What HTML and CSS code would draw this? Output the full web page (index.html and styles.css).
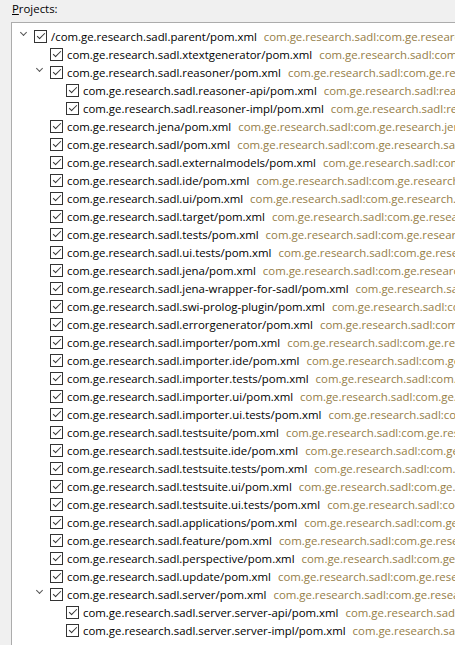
FILE: index.html
```html
<!DOCTYPE html>
<html>
<head>
<meta charset="utf-8">
<link rel="stylesheet" href="styles.css">
</head>
<body>
<div class="label"><u>P</u>rojects:</div>
<div class="panel">
  <div class="row lvl0"><span class="tw open"></span><span class="cb"></span><span class="name">/com.ge.research.sadl.parent/pom.xml</span><span class="gav">com.ge.research.sadl:com.ge.research.sadl.parent:3.5.0-SNAPSHOT:pom</span></div>
  <div class="row lvl1"><span class="tw"></span><span class="cb"></span><span class="name">com.ge.research.sadl.xtextgenerator/pom.xml</span><span class="gav">com.ge.research.sadl:com.ge.research.sadl.xtextgenerator:3.5.0-SNAPSHOT</span></div>
  <div class="row lvl1"><span class="tw open"></span><span class="cb"></span><span class="name">com.ge.research.sadl.reasoner/pom.xml</span><span class="gav">com.ge.research.sadl:com.ge.research.sadl.reasoner:3.5.0-SNAPSHOT:pom</span></div>
  <div class="row lvl2"><span class="tw"></span><span class="cb"></span><span class="name">com.ge.research.sadl.reasoner-api/pom.xml</span><span class="gav">com.ge.research.sadl:reasoner-api:3.5.0-SNAPSHOT</span></div>
  <div class="row lvl2"><span class="tw"></span><span class="cb"></span><span class="name">com.ge.research.sadl.reasoner-impl/pom.xml</span><span class="gav">com.ge.research.sadl:reasoner-impl:3.5.0-SNAPSHOT</span></div>
  <div class="row lvl1"><span class="tw"></span><span class="cb"></span><span class="name">com.ge.research.jena/pom.xml</span><span class="gav">com.ge.research.sadl:com.ge.research.jena:3.5.0-SNAPSHOT</span></div>
  <div class="row lvl1"><span class="tw"></span><span class="cb"></span><span class="name">com.ge.research.sadl/pom.xml</span><span class="gav">com.ge.research.sadl:com.ge.research.sadl:3.5.0-SNAPSHOT</span></div>
  <div class="row lvl1"><span class="tw"></span><span class="cb"></span><span class="name">com.ge.research.sadl.externalmodels/pom.xml</span><span class="gav">com.ge.research.sadl:com.ge.research.sadl.externalmodels</span></div>
  <div class="row lvl1"><span class="tw"></span><span class="cb"></span><span class="name">com.ge.research.sadl.ide/pom.xml</span><span class="gav">com.ge.research.sadl:com.ge.research.sadl.ide:3.5.0-SNAPSHOT</span></div>
  <div class="row lvl1"><span class="tw"></span><span class="cb"></span><span class="name">com.ge.research.sadl.ui/pom.xml</span><span class="gav">com.ge.research.sadl:com.ge.research.sadl.ui:3.5.0-SNAPSHOT</span></div>
  <div class="row lvl1"><span class="tw"></span><span class="cb"></span><span class="name">com.ge.research.sadl.target/pom.xml</span><span class="gav">com.ge.research.sadl:com.ge.research.sadl.target:3.5.0-SNAPSHOT</span></div>
  <div class="row lvl1"><span class="tw"></span><span class="cb"></span><span class="name">com.ge.research.sadl.tests/pom.xml</span><span class="gav">com.ge.research.sadl:com.ge.research.sadl.tests:3.5.0-SNAPSHOT</span></div>
  <div class="row lvl1"><span class="tw"></span><span class="cb"></span><span class="name">com.ge.research.sadl.ui.tests/pom.xml</span><span class="gav">com.ge.research.sadl:com.ge.research.sadl.ui.tests:3.5.0-SNAPSHOT</span></div>
  <div class="row lvl1"><span class="tw"></span><span class="cb"></span><span class="name">com.ge.research.sadl.jena/pom.xml</span><span class="gav">com.ge.research.sadl:com.ge.research.sadl.jena:3.5.0-SNAPSHOT</span></div>
  <div class="row lvl1"><span class="tw"></span><span class="cb"></span><span class="name">com.ge.research.sadl.jena-wrapper-for-sadl/pom.xml</span><span class="gav">com.ge.research.sadl:com.ge.research.sadl.jena-wrapper-for-sadl</span></div>
  <div class="row lvl1"><span class="tw"></span><span class="cb"></span><span class="name">com.ge.research.sadl.swi-prolog-plugin/pom.xml</span><span class="gav">com.ge.research.sadl:com.ge.research.sadl.swi-prolog-plugin</span></div>
  <div class="row lvl1"><span class="tw"></span><span class="cb"></span><span class="name">com.ge.research.sadl.errorgenerator/pom.xml</span><span class="gav">com.ge.research.sadl:com.ge.research.sadl.errorgenerator</span></div>
  <div class="row lvl1"><span class="tw"></span><span class="cb"></span><span class="name">com.ge.research.sadl.importer/pom.xml</span><span class="gav">com.ge.research.sadl:com.ge.research.sadl.importer:3.5.0-SNAPSHOT</span></div>
  <div class="row lvl1"><span class="tw"></span><span class="cb"></span><span class="name">com.ge.research.sadl.importer.ide/pom.xml</span><span class="gav">com.ge.research.sadl:com.ge.research.sadl.importer.ide</span></div>
  <div class="row lvl1"><span class="tw"></span><span class="cb"></span><span class="name">com.ge.research.sadl.importer.tests/pom.xml</span><span class="gav">com.ge.research.sadl:com.ge.research.sadl.importer.tests</span></div>
  <div class="row lvl1"><span class="tw"></span><span class="cb"></span><span class="name">com.ge.research.sadl.importer.ui/pom.xml</span><span class="gav">com.ge.research.sadl:com.ge.research.sadl.importer.ui</span></div>
  <div class="row lvl1"><span class="tw"></span><span class="cb"></span><span class="name">com.ge.research.sadl.importer.ui.tests/pom.xml</span><span class="gav">com.ge.research.sadl:com.ge.research.sadl.importer.ui.tests</span></div>
  <div class="row lvl1"><span class="tw"></span><span class="cb"></span><span class="name">com.ge.research.sadl.testsuite/pom.xml</span><span class="gav">com.ge.research.sadl:com.ge.research.sadl.testsuite</span></div>
  <div class="row lvl1"><span class="tw"></span><span class="cb"></span><span class="name">com.ge.research.sadl.testsuite.ide/pom.xml</span><span class="gav">com.ge.research.sadl:com.ge.research.sadl.testsuite.ide</span></div>
  <div class="row lvl1"><span class="tw"></span><span class="cb"></span><span class="name">com.ge.research.sadl.testsuite.tests/pom.xml</span><span class="gav">com.ge.research.sadl:com.ge.research.sadl.testsuite.tests</span></div>
  <div class="row lvl1"><span class="tw"></span><span class="cb"></span><span class="name">com.ge.research.sadl.testsuite.ui/pom.xml</span><span class="gav">com.ge.research.sadl:com.ge.research.sadl.testsuite.ui</span></div>
  <div class="row lvl1"><span class="tw"></span><span class="cb"></span><span class="name">com.ge.research.sadl.testsuite.ui.tests/pom.xml</span><span class="gav">com.ge.research.sadl:com.ge.research.sadl.testsuite.ui.tests</span></div>
  <div class="row lvl1"><span class="tw"></span><span class="cb"></span><span class="name">com.ge.research.sadl.applications/pom.xml</span><span class="gav">com.ge.research.sadl:com.ge.research.sadl.applications</span></div>
  <div class="row lvl1"><span class="tw"></span><span class="cb"></span><span class="name">com.ge.research.sadl.feature/pom.xml</span><span class="gav">com.ge.research.sadl:com.ge.research.sadl.feature</span></div>
  <div class="row lvl1"><span class="tw"></span><span class="cb"></span><span class="name">com.ge.research.sadl.perspective/pom.xml</span><span class="gav">com.ge.research.sadl:com.ge.research.sadl.perspective</span></div>
  <div class="row lvl1"><span class="tw"></span><span class="cb"></span><span class="name">com.ge.research.sadl.update/pom.xml</span><span class="gav">com.ge.research.sadl:com.ge.research.sadl.update</span></div>
  <div class="row lvl1"><span class="tw open"></span><span class="cb"></span><span class="name">com.ge.research.sadl.server/pom.xml</span><span class="gav">com.ge.research.sadl:com.ge.research.sadl.server</span></div>
  <div class="row lvl2"><span class="tw"></span><span class="cb"></span><span class="name">com.ge.research.sadl.server.server-api/pom.xml</span><span class="gav">com.ge.research.sadl:server-api:3.5.0-SNAPSHOT</span></div>
  <div class="row lvl2"><span class="tw"></span><span class="cb"></span><span class="name">com.ge.research.sadl.server.server-impl/pom.xml</span><span class="gav">com.ge.research.sadl:server-impl:3.5.0-SNAPSHOT</span></div>
</div>
</body>
</html>
```

FILE: styles.css
```css
html, body {
  margin: 0;
  padding: 0;
  width: 455px;
  height: 645px;
  overflow: hidden;
  background: #f0f0f0;
  font-family: "Open Sans", "Noto Sans", sans-serif;
  font-size: 11.4px;
  color: #000;
}

.label {
  line-height: 18px;
  padding-left: 12px;
}

.label u {
  text-decoration-thickness: 1px;
  text-underline-offset: 1px;
}

.panel {
  margin: 4px 0 0 11px;
  height: 700px;
  background: #fff;
  border-top: 1px solid #acacac;
  border-left: 1px solid #acacac;
  padding-top: 4px;
  overflow: hidden;
}

.row {
  display: flex;
  align-items: center;
  height: 18px;
  white-space: nowrap;
}

.lvl0 { padding-left: 8px; }
.lvl1 { padding-left: 24px; }
.lvl2 { padding-left: 40px; }

.tw {
  flex: none;
  width: 14px;
  height: 18px;
  position: relative;
}

.tw.open::before {
  content: "";
  position: absolute;
  left: 1px;
  top: 3px;
  width: 4px;
  height: 4px;
  border-right: 1.5px solid #555;
  border-bottom: 1.5px solid #555;
  transform: rotate(45deg);
}

.cb {
  flex: none;
  width: 11px;
  height: 11px;
  border: 1px solid #333;
  background: #fff;
  margin-right: 4px;
  position: relative;
}

.cb::after {
  content: "";
  position: absolute;
  left: 3.5px;
  top: 0.5px;
  width: 3px;
  height: 7px;
  border-right: 1.2px solid #333;
  border-bottom: 1.2px solid #333;
  transform: rotate(45deg);
}

.name {
  flex: none;
}

.gav {
  flex: none;
  margin-left: 7px;
  color: #957d47;
}
```
